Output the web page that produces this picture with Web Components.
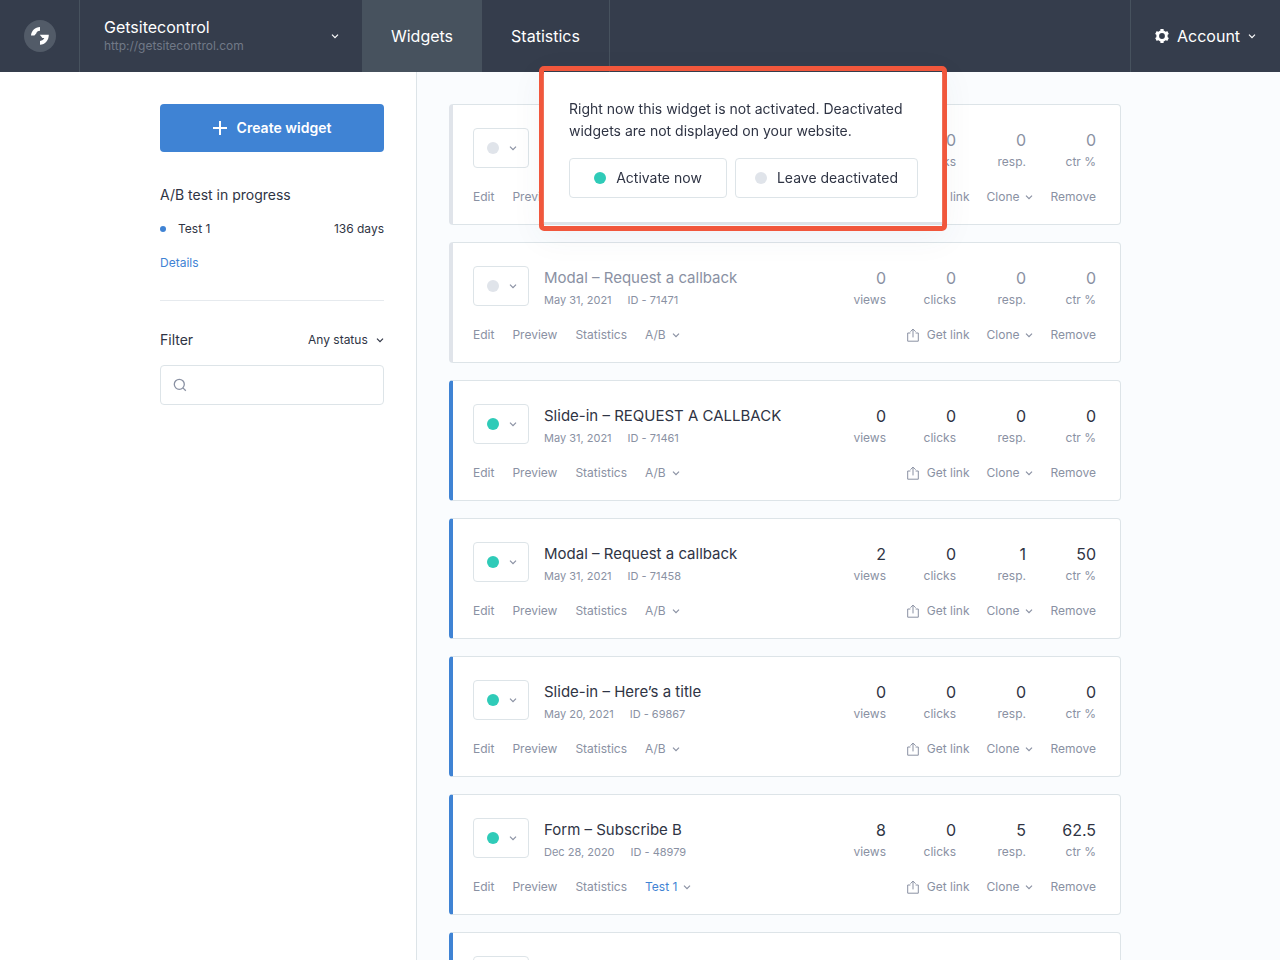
<!DOCTYPE html>
<html lang="en">
<head>
<meta charset="utf-8">
<meta name="viewport" content="width=device-width, initial-scale=1">
<title>Widgets – Getsitecontrol</title>
<style>
  html, body { margin: 0; height: 100%; }
  body {
    --dark: #353d4c;
    --dark-2: #47525e;
    --blue: #3f83d4;
    --teal: #2fcbb8;
    --off: #e0e4ea;
    --line: #dde4e8;
    --ink: #2f3444;
    --muted: #8a91a3;
    font-family: Inter, "Noto Sans", sans-serif;
    font-size: 12px;
    line-height: 20px;
    color: var(--ink);
  }
</style>
</head>
<body>
<gs-app>
  <gs-header slot="header" site="Getsitecontrol" url="http://getsitecontrol.com"></gs-header>
  <gs-sidebar slot="sidebar"></gs-sidebar>
  <gs-widget-card clicks="0" resp="0" ctr="0" inactive>
    <gs-popover>Right now this widget is not activated. Deactivated widgets are not displayed on your website.</gs-popover>
  </gs-widget-card>
  <gs-widget-card name="Modal – Request a callback" date="May 31, 2021" number="71471" views="0" clicks="0" resp="0" ctr="0" inactive></gs-widget-card>
  <gs-widget-card name="Slide-in – REQUEST A CALLBACK" date="May 31, 2021" number="71461" views="0" clicks="0" resp="0" ctr="0"></gs-widget-card>
  <gs-widget-card name="Modal – Request a callback" date="May 31, 2021" number="71458" views="2" clicks="0" resp="1" ctr="50"></gs-widget-card>
  <gs-widget-card name="Slide-in – Here’s a title" date="May 20, 2021" number="69867" views="0" clicks="0" resp="0" ctr="0"></gs-widget-card>
  <gs-widget-card name="Form – Subscribe B" date="Dec 28, 2020" number="48979" views="8" clicks="0" resp="5" ctr="62.5" test="Test 1"></gs-widget-card>
  <gs-widget-card pending></gs-widget-card>
</gs-app>

<script>
const RESET = `
  :host, *, *::before, *::after { box-sizing: border-box; }
  a { color: inherit; text-decoration: none; }
  button, select, input { font: inherit; color: inherit; background: none; border: 0; margin: 0; padding: 0; cursor: pointer; }
  h2, p, dl, dd, ul { margin: 0; padding: 0; font-weight: 400; }
  ul { list-style: none; }
`;

class GsElement extends HTMLElement {
  connectedCallback() {
    if (this.shadowRoot) return;
    this.attachShadow({ mode: "open" }).innerHTML = `<style>${RESET}${this.css()}</style>${this.html()}`;
  }
  get(name) { return this.getAttribute(name) || ""; }
}

const ICONS = {
  chevron: [8, 8, `<path d="M1 2.6 4 5.6 7 2.6" fill="none" stroke="currentColor" stroke-width="1.2"/>`],
  plus: [14, 14, `<path d="M7 0V14M0 7H14" fill="none" stroke="currentColor" stroke-width="2"/>`],
  search: [14, 14, `<circle cx="6.3" cy="6.3" r="5" fill="none" stroke="currentColor" stroke-width="1.3"/><path d="M9.9 9.9 12.8 12.8" stroke="currentColor" stroke-width="1.3"/>`],
  share: [12, 14, `<path d="M3.4 5H.7V13.2H11.3V5H8.6M6 9.4V1.2M3.4 3.7 6 1.1 8.6 3.7" fill="none" stroke="currentColor" stroke-width="1"/>`],
  gear: [14, 14, `<g fill="none" stroke="currentColor"><circle cx="7" cy="7" r="4.300" stroke-width="2.800"/><path stroke-width="3.200" d="M7 0V2.500M7 14V11.500M.94 3.500 3.100 4.750M13.060 3.500 10.900 4.750M.94 10.500 3.100 9.250M13.060 10.500 10.900 9.250"/></g>`],
  logo: [32, 32, `<circle cx="16" cy="16" r="16" fill="#525b68"/><path fill="#fff" d="M16 7C11 7.400 7.400 10.800 7 15.400H10.400L12.400 13.200C12.600 11.900 13.800 10.900 16 10.700Z"/><path fill="#fff" d="M15.800 14.700H24.800C24.800 20.400 21.200 24.400 16 24.800V21C18.300 20.700 19.700 19.700 20.300 18.100H18.400Z"/>`]
};

customElements.define("gs-icon", class extends GsElement {
  css() { return `:host { display: inline-flex; flex: none; } svg { display: block; }`; }
  html() {
    const [w, h, body] = ICONS[this.get("name")];
    return `<svg width="${w}" height="${h}" viewBox="0 0 ${w} ${h}" aria-hidden="true">${body}</svg>`;
  }
});

customElements.define("gs-dot", class extends GsElement {
  css() {
    return `:host { display: block; flex: none; width: 12px; height: 12px; border-radius: 50%; background: var(--teal); }
      :host([off]) { background: var(--off); }
      :host([small]) { width: 6px; height: 6px; background: var(--blue); }`;
  }
  html() { return ""; }
});

customElements.define("gs-app", class extends GsElement {
  css() {
    return `
      :host { display: block; height: 100vh; overflow: hidden auto; scrollbar-width: none; background: #fafcfe; }
      header { position: sticky; top: 0; z-index: 1; }
      .body { display: flex; min-height: calc(100vh - 72px); }
      aside { flex: none; width: calc(50% - 223px); min-width: 264px; background: #fff; border-right: 1px solid var(--line); }
      main { flex: 1; min-width: 0; padding: 32px; }
      .list { display: grid; gap: 17px; max-width: 672px; }`;
  }
  html() {
    return `<header><slot name="header"></slot></header>
      <div class="body"><aside><slot name="sidebar"></slot></aside>
      <main><div class="list"><slot></slot></div></main></div>`;
  }
});

customElements.define("gs-header", class extends GsElement {
  css() {
    return `
      :host { display: flex; height: 72px; background: var(--dark); color: #fff; font-size: 16px; }
      .logo { display: flex; align-items: center; justify-content: center; width: 80px; border-right: 1px solid var(--dark-2); }
      .site { display: flex; align-items: center; justify-content: space-between; width: 282px; padding: 0 23px 0 24px; text-align: left; }
      .site span { display: block; line-height: 20px; }
      .site .url { font-size: 12px; color: #717987; line-height: 18px; }
      nav { display: flex; flex: 1; }
      nav a { display: flex; align-items: center; justify-content: center; width: 120px; }
      nav a[aria-current] { background: var(--dark-2); }
      nav a + a { width: 128px; border-right: 1px solid var(--dark-2); }
      .account { display: flex; align-items: center; gap: 8px; width: 150px; padding-left: 24px; border-left: 1px solid var(--dark-2); }`;
  }
  html() {
    return `<a class="logo" href="#" aria-label="Home"><gs-icon name="logo"></gs-icon></a>
      <button class="site" type="button"><span><span>${this.get("site")}</span><span class="url">${this.get("url")}</span></span><gs-icon name="chevron"></gs-icon></button>
      <nav><a href="#" aria-current="page">Widgets</a><a href="#">Statistics</a></nav>
      <button class="account" type="button"><gs-icon name="gear"></gs-icon>Account<gs-icon name="chevron"></gs-icon></button>`;
  }
});

customElements.define("gs-sidebar", class extends GsElement {
  css() {
    return `
      :host { display: block; width: 224px; margin: 32px 32px 32px auto; }
      .create { display: flex; align-items: center; justify-content: center; gap: 10px; width: 100%; height: 48px; border-radius: 4px; background: var(--blue); color: #fff; font-size: 14px; font-weight: 600; }
      h2, label { font-size: 14px; line-height: 20px; }
      h2 { margin-top: 33px; }
      .row { display: flex; align-items: center; justify-content: space-between; }
      .test { margin: 14px 0; }
      .test a { display: flex; align-items: center; gap: 12px; }
      .details { color: var(--blue); }
      .filter { margin-top: 27px; padding-top: 29px; border-top: 1px solid #e6eaee; }
      .status { display: flex; align-items: center; position: relative; }
      select { appearance: none; padding-right: 16px; outline: 0; }
      .status gs-icon { position: absolute; right: 0; pointer-events: none; }
      .search { display: flex; align-items: center; gap: 12px; height: 40px; margin-top: 15px; padding: 0 12px; border: 1px solid var(--line); border-radius: 4px; color: var(--muted); }
      .search input { flex: 1; min-width: 0; outline: 0; cursor: text; }`;
  }
  html() {
    return `<button class="create" type="button"><gs-icon name="plus"></gs-icon>Create widget</button>
      <h2>A/B test in progress</h2>
      <div class="row test"><a href="#"><gs-dot small></gs-dot>Test 1</a><span>136 days</span></div>
      <a class="details" href="#">Details</a>
      <div class="row filter"><label for="q">Filter</label>
        <span class="status"><select aria-label="Status"><option>Any status</option></select><gs-icon name="chevron"></gs-icon></span></div>
      <div class="search"><gs-icon name="search"></gs-icon><input id="q" type="search"></div>`;
  }
});

customElements.define("gs-widget-card", class extends GsElement {
  css() {
    return `
      :host { display: block; position: relative; min-height: 121px; padding: 23px 24px 19px 20px; background: #fff; border: 1px solid var(--line); border-left: 4px solid var(--blue); border-radius: 4px; color: var(--muted); }
      :host([inactive]) { border-left-color: var(--off); }
      .head { display: flex; height: 44px; }
      .state { display: flex; align-items: center; justify-content: center; gap: 10px; width: 56px; height: 40px; padding-left: 2px; border: 1px solid var(--line); border-radius: 4px; }
      .title { flex: 1; min-width: 0; padding-left: 15px; }
      h2, dd { font-size: 16px; line-height: 24px; color: var(--ink); }
      h2 { font-size: 15px; }
      :host([inactive]) h2, :host([inactive]) dd { color: var(--muted); }
      .meta { display: flex; gap: 16px; font-size: 11px; }
      dl { display: flex; }
      dl div { display: flex; flex-direction: column-reverse; justify-content: flex-end; width: 70px; text-align: right; }
      .actions { display: flex; justify-content: space-between; margin-top: 17px; line-height: 16px; }
      ul { display: flex; gap: 18px; }
      ul + ul { gap: 17px; }
      li > * { display: flex; align-items: center; gap: 6px; }
      .link { gap: 8px; }
      .link gs-icon { margin: -1px 0; }
      .test { color: var(--blue); }
      .test gs-icon { color: var(--muted); }`;
  }
  html() {
    const off = this.hasAttribute("inactive") ? "off" : "";
    const state = `<button class="state" type="button" aria-label="Widget status"><gs-dot ${off}></gs-dot><gs-icon name="chevron"></gs-icon></button>`;
    if (this.hasAttribute("pending")) return state;
    const title = this.get("name") && `<h2>${this.get("name")}</h2><div class="meta"><span>${this.get("date")}</span><span>ID - ${this.get("number")}</span></div>`;
    const stat = (key, label) => this.get(key) && `<div><dt>${label}</dt><dd>${this.get(key)}</dd></div>`;
    const test = this.get("test");
    const more = this.get("name") && `<li><a href="#">Statistics</a></li>
      <li><button type="button" class="${test && "test"}">${test || "A/B"}<gs-icon name="chevron"></gs-icon></button></li>`;
    return `
      <div class="head">${state}
        <div class="title">${title}</div>
        <dl>${stat("views", "views")}${stat("clicks", "clicks")}${stat("resp", "resp.")}${stat("ctr", "ctr %")}</dl>
      </div>
      <div class="actions">
        <ul><li><a href="#">Edit</a></li><li><a href="#">Preview</a></li>${more}</ul>
        <ul><li><a class="link" href="#"><gs-icon name="share"></gs-icon>Get link</a></li>
          <li><button type="button">Clone<gs-icon name="chevron"></gs-icon></button></li><li><button type="button">Remove</button></li></ul>
      </div>
      <slot></slot>`;
  }
});

customElements.define("gs-popover", class extends GsElement {
  css() {
    return `
      :host { display: block; position: absolute; z-index: 2; left: 86px; top: -39px; width: 408px; padding-top: 1px; border: 5px solid #f1573c; border-radius: 5px; color: var(--ink); font-size: 14px; box-shadow: 0 8px 32px rgba(60, 75, 90, .05); }
      .box { margin-bottom: 4px; padding: 26px 24px 24px 25px; background: #fff; box-shadow: 0 2px 1px #dfe3e8; }
      p { line-height: 22px; }
      .buttons { display: grid; grid-template-columns: 158fr 183fr; gap: 8px; margin-top: 16px; }
      button { display: flex; align-items: center; justify-content: center; gap: 10px; height: 40px; border: 1px solid var(--line); border-radius: 4px; white-space: nowrap; }`;
  }
  html() {
    return `<div class="box"><p><slot></slot></p><div class="buttons">
      <button type="button"><gs-dot></gs-dot>Activate now</button>
      <button type="button"><gs-dot off></gs-dot>Leave deactivated</button></div></div>`;
  }
});
</script>
</body>
</html>
